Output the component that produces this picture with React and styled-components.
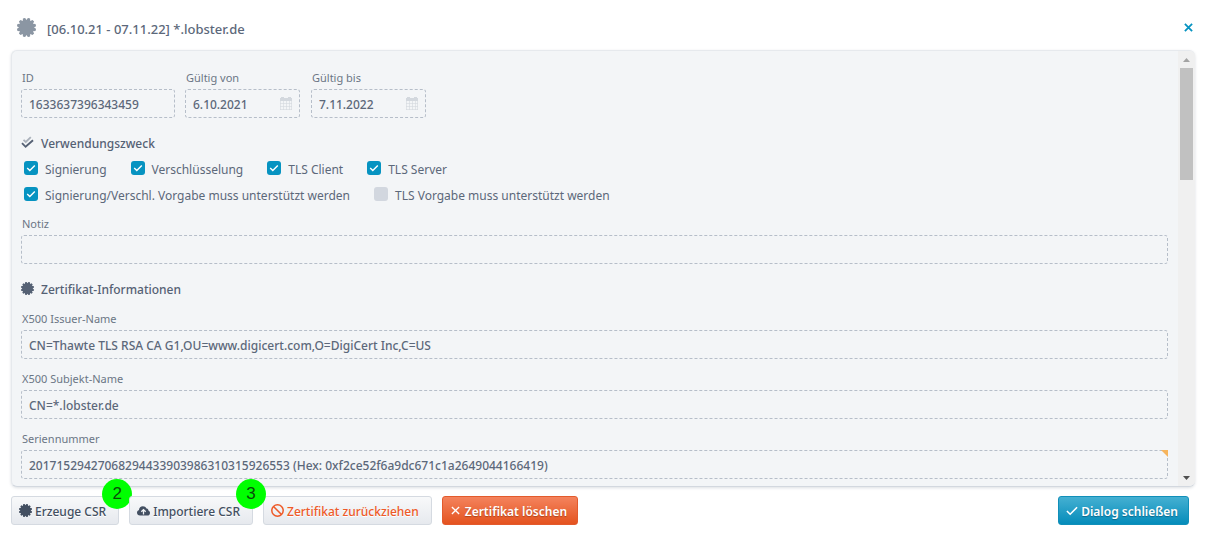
import styled, { createGlobalStyle } from "styled-components";

const GlobalStyle = createGlobalStyle`
  * {
    box-sizing: border-box;
  }
  body {
    margin: 0;
    background: #fff;
    color: #556174;
    font-family: "Noto Sans", "Liberation Sans", sans-serif;
    font-size: 12px;
  }
  input,
  button {
    font-family: inherit;
  }
`;

const Dialog = styled.main`
  display: flex;
  flex-direction: column;
  padding: 4px 11px 14px;
`;

const Header = styled.header`
  display: flex;
  align-items: center;
  height: 46px;
  padding-left: 6px;
  color: #8b96a3;
`;

const Title = styled.h1`
  flex: 1;
  margin: 4px 0 0 11px;
  color: #5c687a;
  font-size: 13px;
  font-weight: 500;
  line-height: 20px;
`;

const CloseButton = styled.button`
  display: flex;
  align-items: center;
  justify-content: center;
  width: 13px;
  height: 20px;
  padding: 0;
  border: none;
  background: none;
  color: #0693c1;
  cursor: pointer;
`;

const Panel = styled.section`
  display: flex;
  overflow: hidden;
  border: 1px solid #e6e9ed;
  border-right: none;
  border-bottom-color: #d3d8df;
  border-radius: 6px;
  background: #f3f5f7;
  box-shadow: 0 1px 3px rgba(60, 75, 95, 0.18);
`;

const PanelBody = styled.div`
  flex: 1;
  min-width: 0;
  padding: 17px 10px 7px 9px;
`;

const FieldRow = styled.div`
  display: flex;
  gap: ${(props) => props.$gap || "10px"};
`;

const FieldList = styled.div`
  display: flex;
  flex-direction: column;
  gap: 10px;
`;

const FieldWrap = styled.div`
  display: flex;
  flex-direction: column;
  gap: 1px;
  width: ${(props) => props.$width || "100%"};
`;

const FieldLabel = styled.label`
  padding-left: 1px;
  color: #6b7685;
  font-size: 11px;
  line-height: 20px;
`;

const InputBox = styled.div`
  position: relative;
  display: flex;
  align-items: center;
  height: 29px;
  padding: 0 7px;
  border: 1px dashed #b6bec9;
  border-radius: 3px;
  color: #d3d8de;
`;

const Input = styled.input`
  flex: 1;
  min-width: 0;
  height: 27px;
  padding: 2px 0 0;
  border: none;
  outline: none;
  background: none;
  color: #5c687a;
  font-size: 12px;
  font-weight: 500;
`;

const Corner = styled.span`
  position: absolute;
  top: -1px;
  right: -1px;
  border-top: 7px solid #f6b45c;
  border-left: 7px solid transparent;
`;

const SectionTitle = styled.h2`
  display: flex;
  align-items: center;
  gap: 7px;
  height: 24px;
  margin: 12px 0 ${(props) => props.$bottom || "1px"};
  color: #556174;
  font-size: 12px;
  font-weight: 500;
`;

const SectionText = styled.span`
  padding-top: 2px;
`;

const CheckRow = styled.div`
  display: flex;
  align-items: center;
  gap: 24px;
  height: 26px;
  padding-left: 3px;
`;

const CheckLabel = styled.label`
  display: flex;
  align-items: center;
  gap: 7px;
  color: #5c687a;
  font-size: 12px;
  font-weight: 400;
  line-height: 22px;
  white-space: nowrap;
`;

const CheckText = styled.span`
  padding-top: 4px;
`;

const CheckBox = styled.input`
  appearance: none;
  width: 14px;
  height: 14px;
  margin: 0;
  border-radius: 3px;
  background: #d2d7df;

  &:checked {
    background: #0693c1
      url("data:image/svg+xml,%3Csvg xmlns='http://www.w3.org/2000/svg' viewBox='0 0 14 14'%3E%3Cpath d='M3.2 7l2.6 2.5L10.8 4.4' fill='none' stroke='white' stroke-width='1.4'/%3E%3C/svg%3E");
  }
`;

const Note = styled.div`
  margin-top: 7px;
`;

const ScrollBar = styled.div`
  display: flex;
  flex-direction: column;
  align-items: center;
  width: 17px;
  background: #f0f0f0;
`;

const ScrollThumb = styled.div`
  width: 13px;
  height: 112px;
  margin-bottom: auto;
  background: #c1c1c1;
`;

const ScrollButton = styled.button`
  display: flex;
  align-items: center;
  justify-content: center;
  width: 17px;
  height: 17px;
  padding: 0;
  border: none;
  background: none;
  color: ${(props) => (props.$dim ? "#a3a3a3" : "#505050")};
`;

const Footer = styled.footer`
  display: flex;
  gap: 10px;
  margin-top: 9px;
  padding-right: 6px;
`;

const ButtonSlot = styled.div`
  position: relative;
  margin-left: ${(props) => (props.$end ? "auto" : "0")};
`;

const Button = styled.button`
  display: flex;
  align-items: center;
  gap: 3px;
  height: 29px;
  padding: 0 12px 0 7px;
  border: 1px solid #d5dae1;
  border-radius: 3px;
  background: linear-gradient(#f8f9fa, #e6e9ee);
  color: #434f61;
  font-size: 12px;
  font-weight: 500;
  text-shadow: 0 1px 0 #fff;
  white-space: nowrap;
  cursor: pointer;
`;

const ButtonText = styled.span`
  padding-top: 2px;
`;

const WarnButton = styled(Button)`
  color: #ee5a28;
`;

const DangerButton = styled(Button)`
  gap: 5px;
  padding: 0 10px 0 8px;
  border-color: #e35a2c;
  background: linear-gradient(#f4835d, #e4531f);
  color: #fff;
  font-weight: 600;
  text-shadow: 0 1px 1px rgba(120, 40, 10, 0.5);
`;

const PrimaryButton = styled(Button)`
  padding: 0 10px 0 7px;
  border-color: #118fb9;
  background: linear-gradient(#45b0d2, #058cba);
  color: #fff;
  font-weight: 600;
  text-shadow: 0 1px 1px rgba(0, 60, 90, 0.5);
`;

const Badge = styled.span`
  position: absolute;
  top: -17px;
  right: -13px;
  width: 30px;
  height: 30px;
  border-radius: 50%;
  background: #00ff00;
  color: #0a4a0a;
  font-family: "Liberation Sans", Arial, sans-serif;
  font-size: 17px;
  line-height: 30px;
  text-align: center;
`;

const TEETH = 12;
const sealPoints = Array.from({ length: TEETH }, (_, i) => {
  const middle = ((i + 0.5) * 2 * Math.PI) / TEETH;
  return [
    [7.9, -0.5],
    [10.2, -0.22],
    [10.2, 0.22],
  ]
    .map(([radius, shift]) => {
      const angle = middle + (shift * 2 * Math.PI) / TEETH;
      return `${10 + radius * Math.sin(angle)},${10 - radius * Math.cos(angle)}`;
    })
    .join(" ");
}).join(" ");

const SealIcon = ({ size }) => (
  <svg width={size} height={size} viewBox="0 0 20 20" fill="currentColor">
    <polygon points={sealPoints} />
  </svg>
);

const CrossIcon = ({ size, stroke }) => (
  <svg width={size} height={size} viewBox="0 0 10 10" stroke="currentColor" strokeWidth={stroke}>
    <path d="M1 1l8 8M9 1L1 9" />
  </svg>
);

const DoubleCheckIcon = () => (
  <svg width="13" height="13" viewBox="0 0 13 13" fill="none">
    <path d="M2.5 3.8l2.3 2.2L9.8 1.2" stroke="#aab1bb" strokeWidth="1.8" />
    <path d="M1 7.2l3.6 3.6L12 4.2" stroke="#556174" strokeWidth="1.9" />
  </svg>
);

const CalendarIcon = () => (
  <svg width="12" height="14" viewBox="0 0 12 14" fill="none" stroke="currentColor">
    <path d="M0 2.5h12M2.5 0v2M9.5 0v2" strokeWidth="3" />
    <path d="M0 6.5h12M0 9.5h12M0 12.5h12M.5 4v9M3.5 4v9M6.5 4v9M9.5 4v9M11.5 4v9" strokeOpacity=".6" />
  </svg>
);

const CloudIcon = () => (
  <svg width="13" height="10" viewBox="0 0 13 10">
    <path
      d="M3 9.6C1.2 9.6 0 8.4 0 6.8c0-1.3.8-2.3 2-2.7C2 1.9 3.7.2 5.9.2c1.6 0 2.9.9 3.5 2.3 1.2 0 2 .9 2 2 1 .4 1.6 1.3 1.6 2.4 0 1.6-1.2 2.7-2.7 2.7z"
      fill="currentColor"
    />
    <path d="M6.5 8.5V4M4.3 5.8l2.2-2.2 2.2 2.2" fill="none" stroke="#f1f3f5" strokeWidth="1.3" />
  </svg>
);

const BanIcon = () => (
  <svg width="13" height="13" viewBox="0 0 13 13" fill="none" stroke="currentColor" strokeWidth="1.5">
    <circle cx="6.5" cy="6.5" r="5.7" />
    <path d="M2.5 2.5l8 8" />
  </svg>
);

const TickIcon = () => (
  <svg width="12" height="10" viewBox="0 0 13 10" fill="none" stroke="currentColor" strokeWidth="1.7">
    <path d="M1 5l3.5 3.5L12 1" />
  </svg>
);

const ArrowIcon = ({ down }) => (
  <svg width="7" height="4" viewBox="0 0 7 4" fill="currentColor">
    <path d={down ? "M0 0h7L3.5 4z" : "M0 4h7L3.5 0z"} />
  </svg>
);

const Field = ({ id, label, value, width, date, corner }) => (
  <FieldWrap $width={width}>
    <FieldLabel htmlFor={id}>{label}</FieldLabel>
    <InputBox>
      <Input id={id} type="text" defaultValue={value} readOnly />
      {date && <CalendarIcon />}
      {corner && <Corner />}
    </InputBox>
  </FieldWrap>
);

const Check = ({ label, checked }) => (
  <CheckLabel>
    <CheckBox type="checkbox" defaultChecked={checked} />
    <CheckText>{label}</CheckText>
  </CheckLabel>
);

export default function App() {
  return (
    <>
      <GlobalStyle />
      <Dialog>
        <Header>
          <SealIcon size={19} />
          <Title>[06.10.21 - 07.11.22] *.lobster.de</Title>
          <CloseButton aria-label="Schließen">
            <CrossIcon size={9} stroke={2} />
          </CloseButton>
        </Header>

        <Panel>
          <PanelBody>
            <FieldRow>
              <Field id="cert-id" label="ID" value="1633637396343459" width="154px" />
              <FieldRow $gap="11px">
                <Field id="valid-from" label="Gültig von" value="6.10.2021" width="115px" date />
                <Field id="valid-to" label="Gültig bis" value="7.11.2022" width="115px" date />
              </FieldRow>
            </FieldRow>

            <SectionTitle>
              <DoubleCheckIcon />
              <SectionText>Verwendungszweck</SectionText>
            </SectionTitle>
            <CheckRow>
              <Check label="Signierung" checked />
              <Check label="Verschlüsselung" checked />
              <Check label="TLS Client" checked />
              <Check label="TLS Server" checked />
            </CheckRow>
            <CheckRow>
              <Check label="Signierung/Verschl. Vorgabe muss unterstützt werden" checked />
              <Check label="TLS Vorgabe muss unterstützt werden" />
            </CheckRow>
            <Note>
              <Field id="note" label="Notiz" value="" />
            </Note>

            <SectionTitle $bottom="9px">
              <SealIcon size={13} />
              <SectionText>Zertifikat-Informationen</SectionText>
            </SectionTitle>
            <FieldList>
              <Field
                id="issuer"
                label="X500 Issuer-Name"
                value="CN=Thawte TLS RSA CA G1,OU=www.digicert.com,O=DigiCert Inc,C=US"
              />
              <Field id="subject" label="X500 Subjekt-Name" value="CN=*.lobster.de" />
              <Field
                id="serial"
                label="Seriennummer"
                value="20171529427068294433903986310315926553 (Hex: 0xf2ce52f6a9dc671c1a2649044166419)"
                corner
              />
            </FieldList>
          </PanelBody>
          <ScrollBar>
            <ScrollButton aria-label="Nach oben" $dim>
              <ArrowIcon />
            </ScrollButton>
            <ScrollThumb />
            <ScrollButton aria-label="Nach unten">
              <ArrowIcon down />
            </ScrollButton>
          </ScrollBar>
        </Panel>

        <Footer>
          <ButtonSlot>
            <Button>
              <SealIcon size={13} />
              <ButtonText>Erzeuge CSR</ButtonText>
            </Button>
            <Badge>2</Badge>
          </ButtonSlot>
          <ButtonSlot>
            <Button>
              <CloudIcon />
              <ButtonText>Importiere CSR</ButtonText>
            </Button>
            <Badge>3</Badge>
          </ButtonSlot>
          <WarnButton>
            <BanIcon />
            <ButtonText>Zertifikat zurückziehen</ButtonText>
          </WarnButton>
          <DangerButton>
            <CrossIcon size={9} stroke={1.5} />
            <ButtonText>Zertifikat löschen</ButtonText>
          </DangerButton>
          <ButtonSlot $end>
            <PrimaryButton>
              <TickIcon />
              <ButtonText>Dialog schließen</ButtonText>
            </PrimaryButton>
          </ButtonSlot>
        </Footer>
      </Dialog>
    </>
  );
}
